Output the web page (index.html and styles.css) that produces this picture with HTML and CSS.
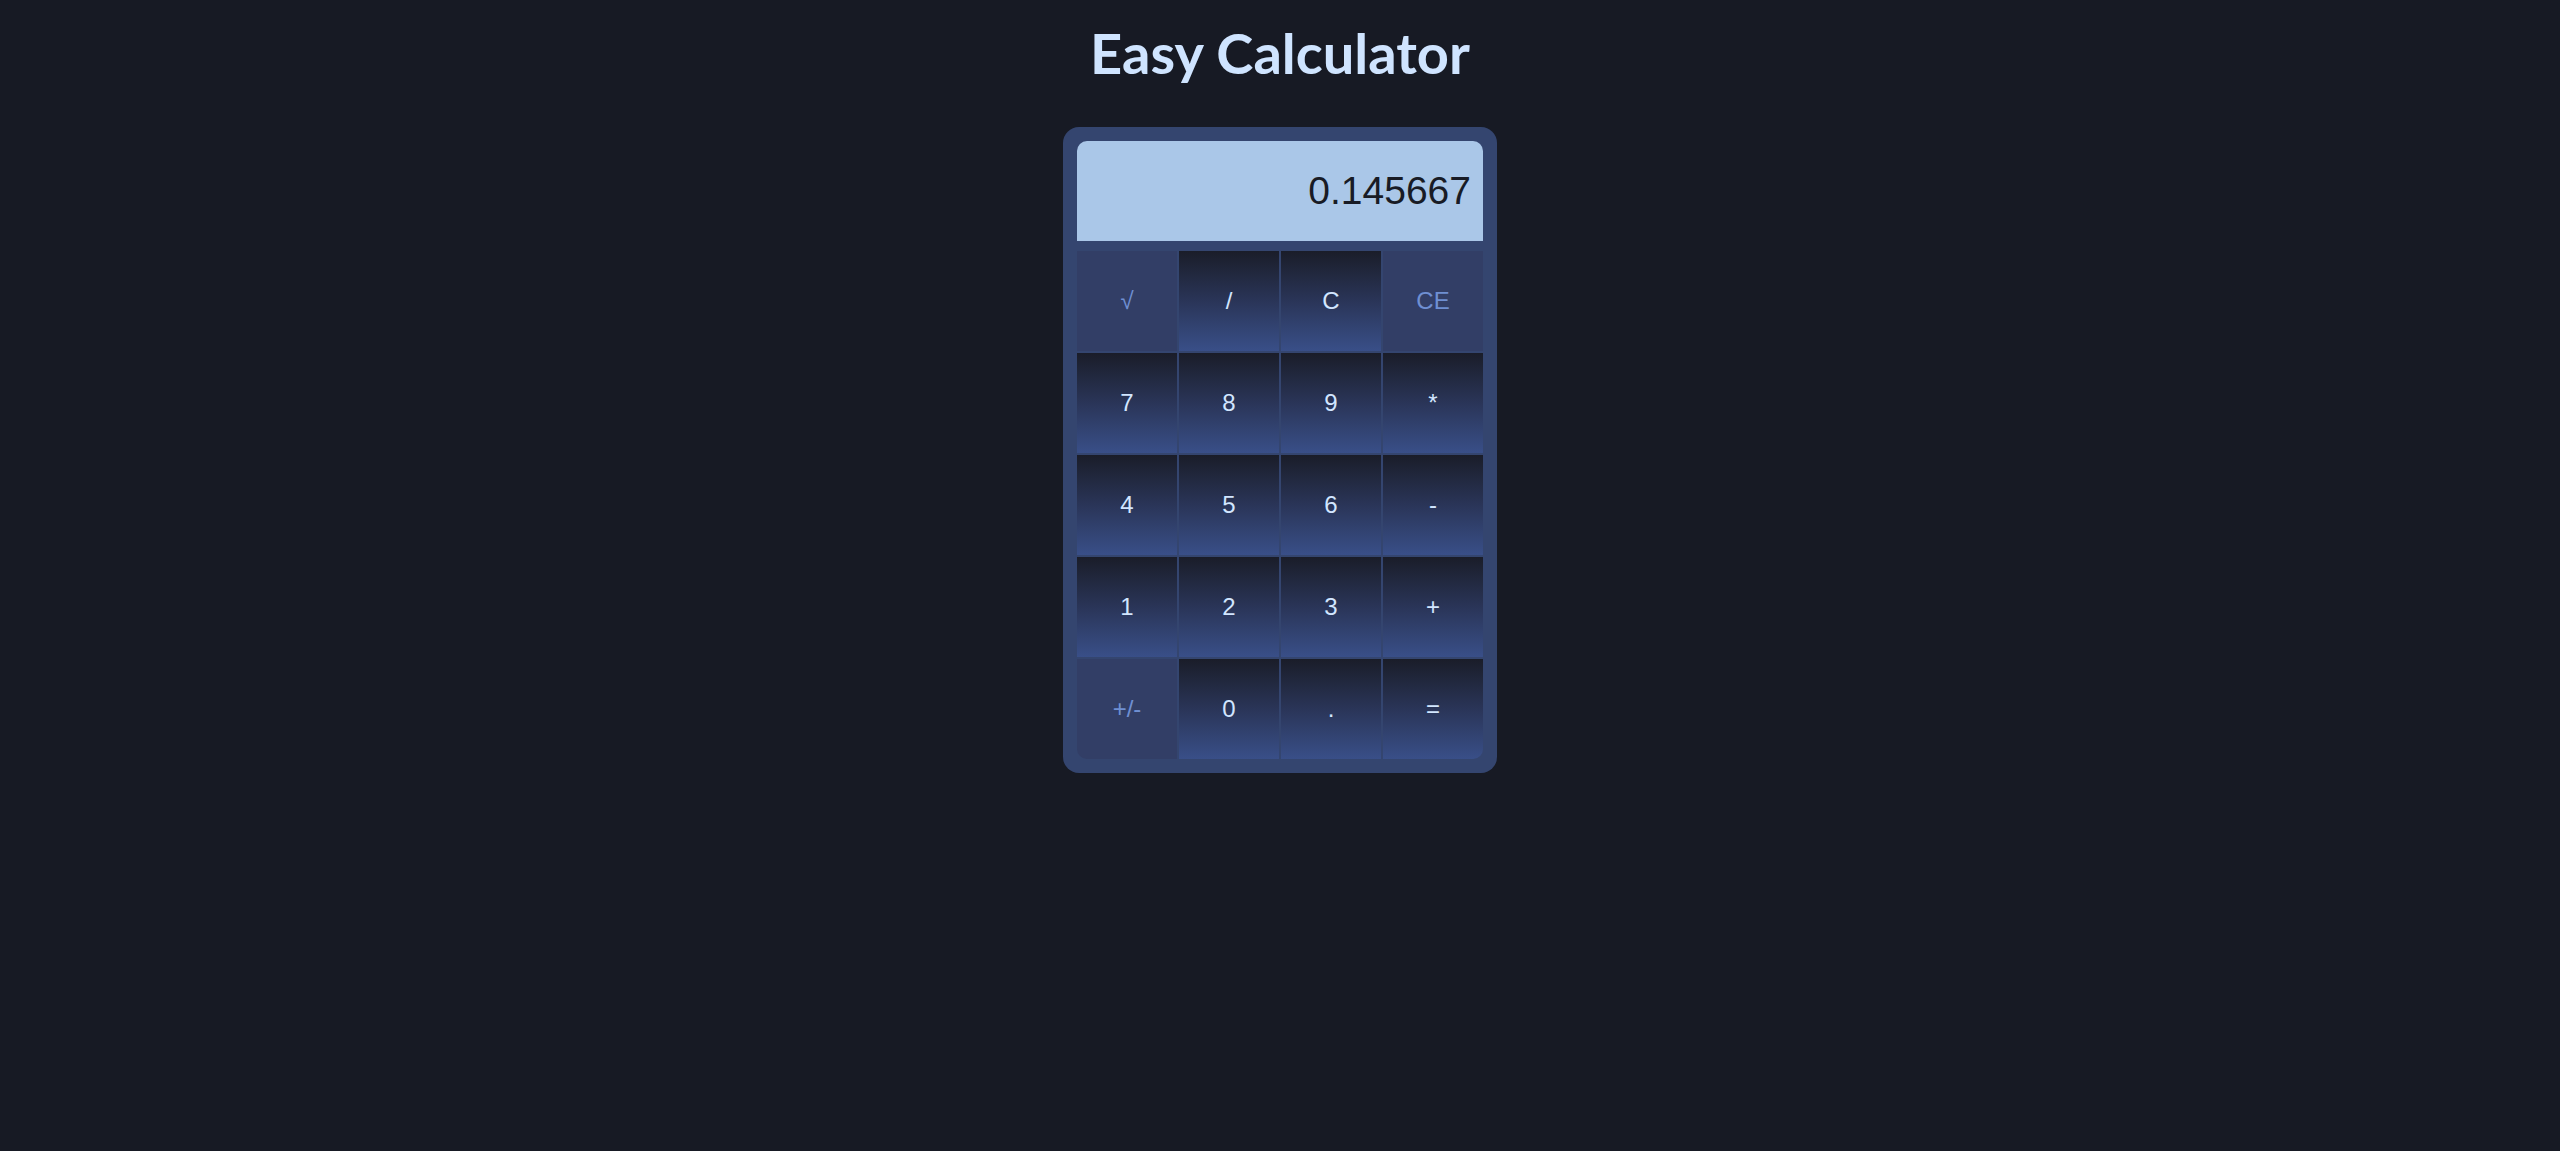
FILE: index.html
```html
<!DOCTYPE html>
<html>
<head>
<meta charset="utf-8">
<title>Easy Calculator</title>
<link rel="stylesheet" href="styles.css">
</head>
<body>
<h1 class="title">Easy Calculator</h1>
<div class="calc">
  <div class="display">0.145667</div>
  <div class="keys">
    <button class="key key-alt">√</button>
    <button class="key">/</button>
    <button class="key">C</button>
    <button class="key key-alt">CE</button>
    <button class="key">7</button>
    <button class="key">8</button>
    <button class="key">9</button>
    <button class="key">*</button>
    <button class="key">4</button>
    <button class="key">5</button>
    <button class="key">6</button>
    <button class="key">-</button>
    <button class="key">1</button>
    <button class="key">2</button>
    <button class="key">3</button>
    <button class="key">+</button>
    <button class="key key-alt key-bl">+/-</button>
    <button class="key">0</button>
    <button class="key">.</button>
    <button class="key key-br">=</button>
  </div>
</div>
</body>
</html>
```
FILE: styles.css
```css
html, body {
  margin: 0;
  padding: 0;
  background: #171a24;
}
body {
  display: flex;
  flex-direction: column;
  align-items: center;
  font-family: "Liberation Sans", Arial, sans-serif;
}
.title {
  margin: 17px 0 0;
  font-family: Lato, sans-serif;
  font-weight: 700;
  font-size: 56px;
  line-height: 72px;
  color: #cfe4ff;
  letter-spacing: 0;
}
.calc {
  margin-top: 38px;
  width: 406px;
  padding: 14px;
  background: #34456f;
  border-radius: 16px;
  display: flex;
  flex-direction: column;
  gap: 10px;
}
.display {
  height: 100px;
  box-sizing: border-box;
  background: #aac7e8;
  border-radius: 10px 10px 0 0;
  color: #181b25;
  font-size: 39px;
  display: flex;
  align-items: center;
  justify-content: flex-end;
  padding-right: 12px;
}
.keys {
  display: grid;
  grid-template-columns: repeat(4, 100px);
  grid-auto-rows: 100px;
  gap: 2px;
}
.key {
  border: 0;
  margin: 0;
  padding: 0;
  font-family: "Liberation Sans", Arial, sans-serif;
  font-size: 24px;
  color: #d2e6ff;
  background: linear-gradient(to bottom, #1a1d29 0%, #2a3558 50%, #394f88 100%);
}
.key-alt {
  background: #323e66;
  color: #6f8fd2;
}
.key-bl {
  border-bottom-left-radius: 10px;
}
.key-br {
  border-bottom-right-radius: 10px;
}
```
